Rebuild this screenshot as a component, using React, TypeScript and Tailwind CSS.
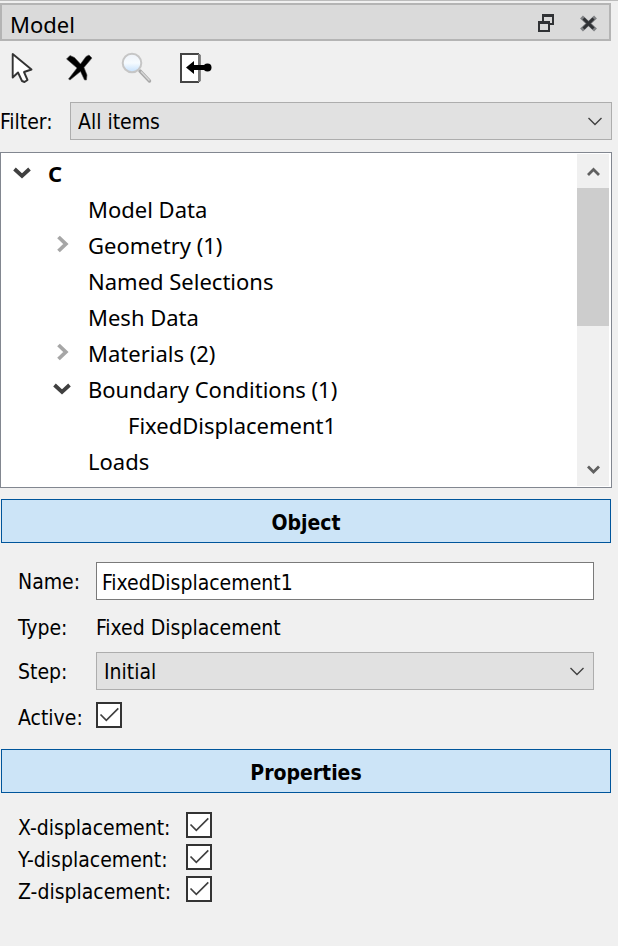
import { useState, type ReactNode } from "react";

type NodeState = "open" | "closed" | "leaf";

interface TreeRow {
  label: string;
  level: 0 | 1 | 2;
  state: NodeState;
}

const rows: TreeRow[] = [
  { label: "C", level: 0, state: "open" },
  { label: "Model Data", level: 1, state: "leaf" },
  { label: "Geometry (1)", level: 1, state: "closed" },
  { label: "Named Selections", level: 1, state: "leaf" },
  { label: "Mesh Data", level: 1, state: "leaf" },
  { label: "Materials (2)", level: 1, state: "closed" },
  { label: "Boundary Conditions (1)", level: 1, state: "open" },
  { label: "FixedDisplacement1", level: 2, state: "leaf" },
  { label: "Loads", level: 1, state: "leaf" },
];

const indent = { 0: "pl-[7px]", 1: "pl-[47px]", 2: "pl-[87px]" };

function Expander({ state }: { state: NodeState }) {
  return (
    <svg className="h-7 w-7 shrink-0" viewBox="0 0 28 28" fill="none" aria-hidden="true">
      {state === "open" && <path d="M6.5 10 14 17 21.5 10" stroke="#404040" strokeWidth="3.8" />}
      {state === "closed" && <path d="M10.5 6 17.8 13 10.5 20" stroke="#a6a6a6" strokeWidth="3.8" />}
    </svg>
  );
}

function ScrollArrow({ up }: { up?: boolean }) {
  return (
    <button
      type="button"
      aria-label={up ? "Scroll up" : "Scroll down"}
      className="flex h-[34px] w-full items-center justify-center"
    >
      <svg className="h-4 w-4" viewBox="0 0 16 16" fill="none" stroke="#606060" strokeWidth="2.8" aria-hidden="true">
        <path d={up ? "M3 12 8.5 6.5 14 12" : "M3 5.5 8.5 11 14 5.5"} />
      </svg>
    </button>
  );
}

function Combo({ id, options }: { id: string; options: string[] }) {
  return (
    <div className="relative min-w-0 flex-1">
      <select
        id={id}
        className="block h-[38px] w-full appearance-none border border-[#adadad] bg-[#e1e1e1] pt-0.5 pr-10 pl-[7px] outline-none"
      >
        {options.map((o) => (
          <option key={o}>{o}</option>
        ))}
      </select>
      <svg
        className="pointer-events-none absolute top-3 right-[9px] h-4 w-4"
        viewBox="0 0 16 16"
        fill="none"
        stroke="#404040"
        strokeWidth="1.4"
        aria-hidden="true"
      >
        <path d="M1.5 4 8 10.5 14.5 4" />
      </svg>
    </div>
  );
}

function CheckBox({ id }: { id: string }) {
  const [on, setOn] = useState(true);
  return (
    <span className="relative block h-[26px] w-[26px]">
      <input
        id={id}
        type="checkbox"
        checked={on}
        onChange={(e) => setOn(e.target.checked)}
        className="block h-[26px] w-[26px] appearance-none border-2 border-[#333] bg-white"
      />
      {on && (
        <svg
          className="pointer-events-none absolute inset-0 h-[26px] w-[26px]"
          viewBox="0 0 26 26"
          fill="none"
          stroke="#404040"
          strokeWidth="1.7"
          aria-hidden="true"
        >
          <path d="M4.5 12.5 10.3 18.3 22.3 6.3" />
        </svg>
      )}
    </span>
  );
}

function SectionHeader({ children }: { children: ReactNode }) {
  return (
    <h2 className="mr-px ml-px flex h-11 items-center justify-center border border-[#00559b] bg-[#cce4f7] pt-1 font-bold">
      {children}
    </h2>
  );
}

function ToolButton({ label, children }: { label: string; children: ReactNode }) {
  return (
    <button type="button" aria-label={label} className="h-9 w-9">
      <svg className="h-9 w-9 overflow-visible" viewBox="0 0 36 36" aria-hidden="true">
        {children}
      </svg>
    </button>
  );
}

export default function App() {
  return (
    <main className="min-h-screen border-t border-[#bcbcbc] bg-[#f0f0f0] pt-0.5 pr-1.5 font-['DejaVu_Sans_Condensed','Noto_Sans',sans-serif] text-[21px] leading-7 text-black">
      <header className="mr-px flex h-[38px] items-center border-2 border-[#b4b4b4] bg-[#dadada] pr-2 pl-2 font-['Noto_Sans',sans-serif] text-[22px]">
        <h1 className="flex-1 pt-1">Model</h1>
        <button type="button" aria-label="Float panel" className="mr-[18px] h-6 w-6">
          <svg className="h-6 w-6" viewBox="0 0 24 24" fill="none" stroke="#303235" aria-hidden="true">
            <path d="M8 11V5H18V14H14" strokeWidth="2" />
            <path d="M7 5.5H19" strokeWidth="3" />
            <rect x="4" y="12" width="10" height="9" fill="#dadada" strokeWidth="2" />
            <path d="M3 12.5H15" strokeWidth="3" />
          </svg>
        </button>
        <button type="button" aria-label="Close panel" className="h-6 w-6">
          <svg className="h-6 w-6" viewBox="0 0 24 24" fill="none" aria-hidden="true">
            <path d="M4.5 7 18.5 20M18.5 7 4.5 20" stroke="#808285" strokeWidth="4.2" />
            <path d="M6.5 8.500 16.5 18.500M16.5 8.500 6.5 18.500" stroke="#303235" strokeWidth="3" />
          </svg>
        </button>
      </header>

      <div className="flex h-[61px] items-start gap-5 pt-2 pl-1.5">
        <ToolButton label="Select">
          <path
            d="M6.7 5V28.5L12 23.5 16 32 18.5 33 21.5 31 18 23 25.5 20.5Z"
            fill="#fff"
            stroke="#333"
            strokeWidth="1.9"
            strokeLinejoin="round"
          />
        </ToolButton>
        <ToolButton label="Delete">
          <path
            d="M4.5 10 8 6.5 12.5 8.5 18.5 15 24 7.5 27 6 30 9 22 18.5 25 26 24.5 31 22.5 31 18.5 22.5 8 31 6.5 30 15 19 8 13Z"
            fill="#000"
            stroke="#555"
            strokeWidth="0.6"
          />
        </ToolButton>
        <ToolButton label="Find">
          <defs>
            <linearGradient id="lens" x1="0" y1="0" x2="0" y2="1">
              <stop offset="0" stopColor="#eef2f8" />
              <stop offset="0.5" stopColor="#f6fbff" />
              <stop offset="1" stopColor="#c3dffc" />
            </linearGradient>
          </defs>
          <path d="M22 22 31.5 32" stroke="#a8a8a8" strokeWidth="3.4" strokeLinecap="round" />
          <path d="M23 22.5 31.5 31.5" stroke="#d8d8d8" strokeWidth="1.4" />
          <circle cx="14" cy="14" r="9.3" fill="url(#lens)" stroke="#c6c6c6" strokeWidth="2" />
        </ToolButton>
        <ToolButton label="Exit">
          <path d="M23 6H26.500V32H23Z" fill="#aaa" stroke="#888" strokeWidth="1" />
          <path d="M25 5H7V33H25" fill="#fff" stroke="#444" strokeWidth="2" />
          <path d="M25 5V33" stroke="#777" strokeWidth="2" />
          <path d="M12 18.500 20 12V16H31V21H20V25Z" fill="#000" />
          <circle cx="33.5" cy="18.5" r="4" fill="#000" />
        </ToolButton>
      </div>

      <div className="flex items-center">
        <label htmlFor="filter" className="w-[70px] pt-0.5">
          Filter:
        </label>
        <Combo id="filter" options={["All items", "Geometry", "Materials"]} />
      </div>

      <div className="mt-3 flex h-[336px] border border-[#828790] bg-white font-['Noto_Sans',sans-serif] text-[22px]">
        <ul role="tree" aria-label="Model tree" className="min-w-0 flex-1 overflow-hidden pt-0.5">
          {rows.map((row) => (
            <li
              key={row.label}
              role="treeitem"
              aria-level={row.level + 1}
              aria-expanded={row.state === "leaf" ? undefined : row.state === "open"}
              className={`flex h-9 items-center gap-3 ${indent[row.level]} ${row.level === 0 ? "font-bold" : ""}`}
            >
              <Expander state={row.state} />
              <span>{row.label}</span>
            </li>
          ))}
        </ul>
        <div className="my-px mr-0.5 flex w-8 flex-col bg-[#f0f0f0]">
          <ScrollArrow up />
          <div className="flex-1">
            <div className="h-[138px] bg-[#cdcdcd]" />
          </div>
          <ScrollArrow />
        </div>
      </div>

      <section className="mt-[11px]">
        <SectionHeader>Object</SectionHeader>
        <div className="grid grid-cols-[78px_1fr] gap-y-3 pt-[19px] pr-[18px] pb-[19px] pl-[18px]">
          <label htmlFor="name" className="pt-1.5">
            Name:
          </label>
          <input
            id="name"
            type="text"
            defaultValue="FixedDisplacement1"
            className="block h-[38px] w-full min-w-0 border border-[#7a7a7a] bg-white px-[5px] pt-1 outline-none"
          />
          <span className="h-7 pt-0.5">Type:</span>
          <span className="h-7 pt-0.5">Fixed Displacement</span>
          <label htmlFor="step" className="pt-1.5">
            Step:
          </label>
          <Combo id="step" options={["Initial", "Step-1"]} />
          <label htmlFor="active" className="h-7 pt-0.5">
            Active:
          </label>
          <CheckBox id="active" />
        </div>
      </section>

      <section>
        <SectionHeader>Properties</SectionHeader>
        <div className="grid grid-cols-[168px_1fr] gap-y-1 pt-[19px] pl-[18px]">
          {["X", "Y", "Z"].map((axis) => (
            <div key={axis} className="col-span-2 grid h-7 grid-cols-subgrid">
              <label htmlFor={axis} className="pt-0.5">
                {axis}-displacement:
              </label>
              <CheckBox id={axis} />
            </div>
          ))}
        </div>
      </section>
    </main>
  );
}
